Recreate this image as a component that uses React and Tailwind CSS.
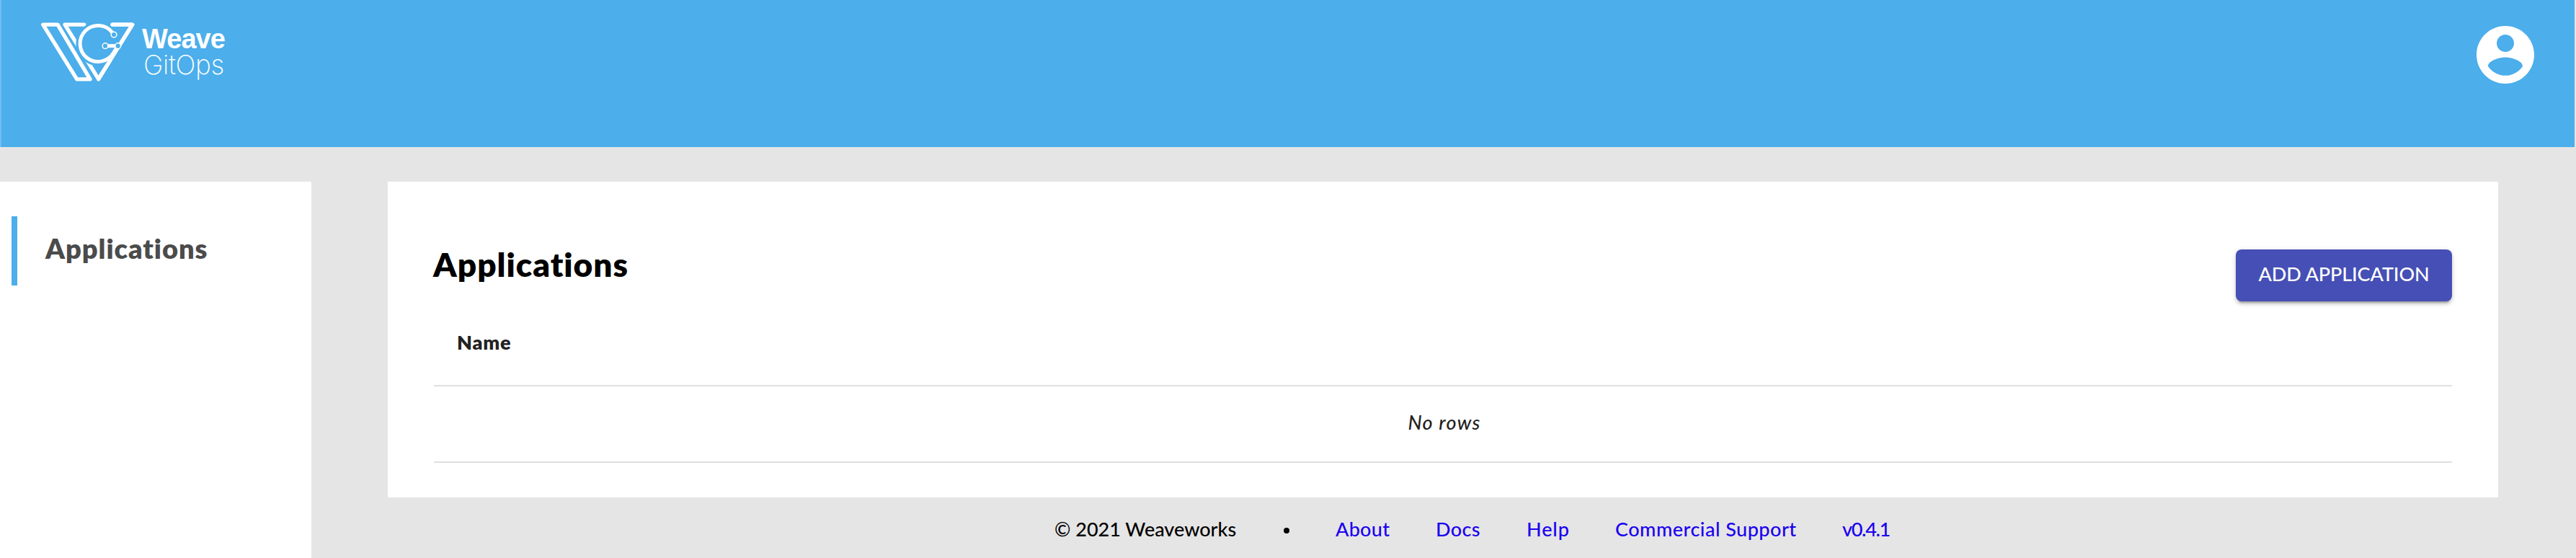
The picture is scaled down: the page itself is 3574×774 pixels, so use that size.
function LogoMark() {
  return (
    <svg viewBox="0 0 432 288" className="h-24 w-36 shrink-0" fill="none" stroke="#fff" strokeWidth="16" strokeLinejoin="round" strokeLinecap="round">
      <path d="M200 30.500H120L260 257L401 30.500H318" />
      <circle cx="258" cy="110" r="76" stroke="#4caeeb" strokeWidth="32" />
      <path d="M29 30.500H90L225 257.500H170Z" />
      <path d="M260 257L401 30.500H318" />
      <path d="M318 64A75 75 0 1 0 322 149L336 126" strokeWidth="15" strokeLinecap="butt" />
      <path d="M288 119H341" strokeWidth="15" strokeLinecap="butt" />
      <g fill="#4caeeb" strokeWidth="4.500">
        <circle cx="324" cy="72" r="11.500" />
        <circle cx="288" cy="119" r="11.500" />
        <circle cx="341" cy="119" r="11.500" />
      </g>
    </svg>
  );
}

function Header() {
  return (
    <header className="mr-0.5 flex h-[204px] items-start justify-between border-l-2 border-[#6fbdf0] bg-[#4caeeb] pl-12">
      <div className="flex pt-6">
        <LogoMark />
        <div className="flex flex-col pt-3 pl-[3px] text-[38px] leading-9 whitespace-nowrap text-white">
          <span className="font-['Liberation_Sans',sans-serif] font-bold tracking-[-0.95px]">Weave</span>
          <span className="pl-[2px] font-[Inter,sans-serif] text-[37px] font-extralight tracking-[-0.4px]">GitOps</span>
        </div>
      </div>
      <svg viewBox="0 0 24 24" className="mt-7 mr-12 size-24" fill="#fff">
        <path d="M12 2C6.480 2 2 6.480 2 12s4.480 10 10 10 10-4.480 10-10S17.520 2 12 2zm0 3c1.660 0 3 1.340 3 3s-1.340 3-3 3-3-1.340-3-3 1.340-3 3-3zm0 14.200c-2.500 0-4.710-1.280-6-3.220.030-1.990 4-3.080 6-3.080 1.990 0 5.970 1.090 6 3.080-1.290 1.940-3.500 3.220-6 3.220z" />
      </svg>
    </header>
  );
}

function Sidebar() {
  return (
    <nav className="w-[432px] shrink-0 bg-white pt-12 pl-4">
      <div className="flex h-24 items-center border-l-8 border-[#4caeeb] pb-[7px] pl-[39px]">
        <span className="text-[38px] font-extrabold tracking-[0.95px] text-[#4b4b4b]">Applications</span>
      </div>
    </nav>
  );
}

function Footer() {
  return (
    <footer className="flex h-[84px] items-center gap-16 pt-1 pl-[925px] text-[27px] font-medium whitespace-nowrap text-[#1a00f0]">
      <span className="w-[254px] text-black">© 2021 Weaveworks</span>
      <span className="mt-1 size-2 rounded-full bg-black" />
      <a className="w-[75px] tracking-[0.3px]">About</a>
      <a className="w-[62px] tracking-[0.4px]">Docs</a>
      <a className="w-[59px] tracking-[0.9px]">Help</a>
      <a className="w-[251px] tracking-[0.5px]">Commercial Support</a>
      <a className="tracking-[-1.3px]">v0.4.1</a>
    </footer>
  );
}

export default function App() {
  return (
    <div className="flex h-[774px] flex-col bg-[#e5e5e5] font-[Lato,sans-serif]">
      <Header />
      <div className="flex grow pt-12">
        <Sidebar />
        <main className="ml-[106px] w-[2928px]">
          <section className="h-[438px] bg-white px-16 pt-[94px]">
            <div className="flex h-[82px] items-start justify-between">
              <h1 className="-mt-[7px] -ml-px text-[46px] leading-[56px] font-extrabold tracking-[1px] text-black">Applications</h1>
              <button className="h-[72px] w-[300px] rounded-lg bg-[#464fb5] pb-[3px] text-[27px] font-medium tracking-[-0.1px] whitespace-nowrap text-white shadow-[0_6px_2px_-4px_rgba(0,0,0,0.2),0_4px_4px_0_rgba(0,0,0,0.14),0_2px_10px_0_rgba(0,0,0,0.12)]">
                ADD APPLICATION
              </button>
            </div>
            <table className="w-full border-separate border-spacing-0 text-[27px] leading-10 text-[#222]">
              <thead>
                <tr>
                  <th className="h-[108px] border-b-2 border-[#e0e0e0] px-8 pb-3 text-left font-extrabold tracking-[0.8px]">Name</th>
                </tr>
              </thead>
              <tbody>
                <tr>
                  <td className="h-[106px] border-b-2 border-[#e0e0e0] pb-1 pl-1 text-center font-medium tracking-[1.3px] italic">No rows</td>
                </tr>
              </tbody>
            </table>
          </section>
          <Footer />
        </main>
      </div>
    </div>
  );
}
